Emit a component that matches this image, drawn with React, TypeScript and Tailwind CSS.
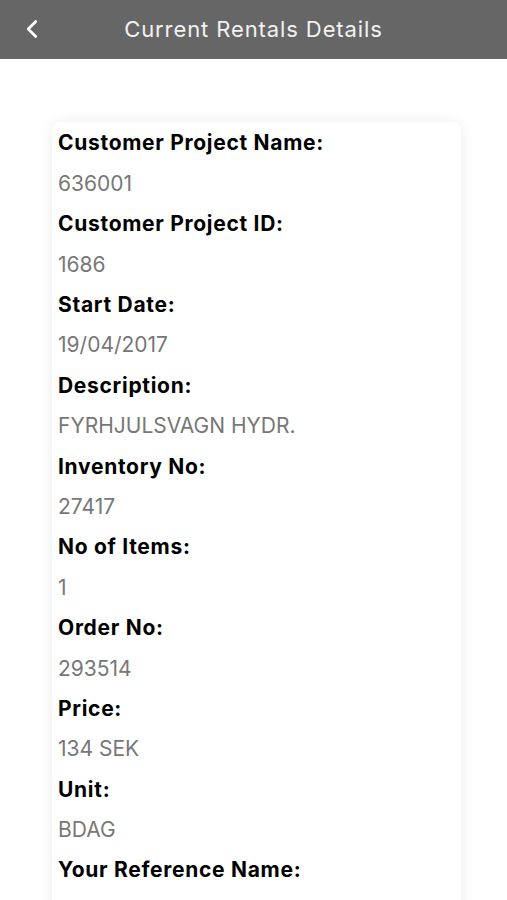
import { ChevronLeft } from "lucide-react";

const rows: [string, string][] = [
  ["Customer Project Name:", "636001"],
  ["Customer Project ID:", "1686"],
  ["Start Date:", "19/04/2017"],
  ["Description:", "FYRHJULSVAGN HYDR."],
  ["Inventory No:", "27417"],
  ["No of Items:", "1"],
  ["Order No:", "293514"],
  ["Price:", "134 SEK"],
  ["Unit:", "BDAG"],
  ["Your Reference Name:", ""],
];

const App = () => {
  return (
    <div className="w-[507px] h-[900px] overflow-hidden bg-white font-['Inter',sans-serif]">
      {/* Header */}
      <header className="h-[59px] bg-[#666666] flex items-center relative">
        <button className="absolute left-[17px] top-[14px] text-white">
          <ChevronLeft className="w-[30px] h-[30px]" strokeWidth={2.2} />
        </button>
        <h1 className="w-full text-center text-[#f2f2f2] text-[22px] tracking-[0.9px]">
          Current Rentals Details
        </h1>
      </header>

      {/* Card */}
      <div className="pt-[63px] pl-[52px] pr-[46px]">
        <div className="bg-white rounded-lg shadow-[0_0_14px_rgba(0,0,0,0.08)] px-[6px] pt-px pb-4">
          {rows.map(([label, value]) => (
            <div key={label}>
              <div className="h-[40.4px] flex items-center text-[21px] font-bold text-black tracking-[0.7px]">
                {label}
              </div>
              <div className="h-[40.4px] flex items-center text-[21px] text-[#777777]">
                {value}
              </div>
            </div>
          ))}
        </div>
      </div>
    </div>
  );
};

export default App;
